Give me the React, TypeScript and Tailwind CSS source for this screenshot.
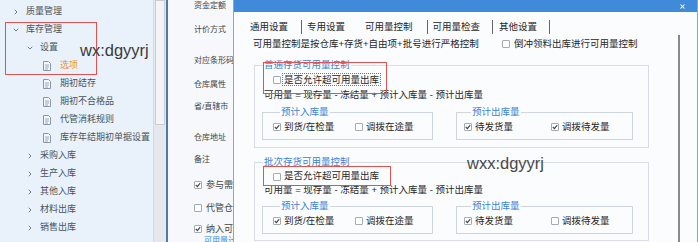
import { ChevronRight, ChevronDown, X } from 'lucide-react';

const tree = [
    { id: 'qm', label: '质量管理', kind: 'closed', pad: 'pl-[12px]' },
    { id: 'kc', label: '库存管理', kind: 'open', pad: 'pl-[12px]' },
    { id: 'sz', label: '设置', kind: 'open', pad: 'pl-[26px]' },
    { id: 'xx', label: '选项', kind: 'doc', active: true },
    { id: 'qcjc', label: '期初结存', kind: 'doc' },
    { id: 'qcbh', label: '期初不合格品', kind: 'doc' },
    { id: 'dg', label: '代管消耗规则', kind: 'doc' },
    { id: 'nj', label: '库存年结期初单据设置', kind: 'doc' },
    { id: 'cg', label: '采购入库', kind: 'closed', pad: 'pl-[26px]' },
    { id: 'sc', label: '生产入库', kind: 'closed', pad: 'pl-[26px]' },
    { id: 'qt', label: '其他入库', kind: 'closed', pad: 'pl-[26px]' },
    { id: 'cl', label: '材料出库', kind: 'closed', pad: 'pl-[26px]' },
    { id: 'xs', label: '销售出库', kind: 'closed', pad: 'pl-[26px]' },
];

function DocIcon() {
    return (
        <svg width="8" height="10" viewBox="0 0 8 10" className="shrink-0">
            <path d="M0.5 0.5 H5.5 L7.5 2.5 V9.5 H0.5 Z" fill="#f4f7fb" stroke="#8a96a6" />
            <path d="M2 4 H6 M2 6 H6 M2 8 H5" stroke="#8a96a6" strokeWidth="0.8" />
        </svg>
    );
}

function Box({ checked = false }: { checked?: boolean }) {
    return (
        <span className="w-[8px] h-[8px] shrink-0 border border-[#a3abb5] bg-white rounded-[1px] flex items-center justify-center">
            {checked && (
                <svg width="6" height="6" viewBox="0 0 6 6">
                    <path d="M0.8 3 L2.4 4.6 L5.2 1.2" fill="none" stroke="#444" strokeWidth="1.1" />
                </svg>
            )}
        </span>
    );
}

function Check({ label, checked, w }: { label: string; checked?: boolean; w?: string }) {
    return (
        <div className={`flex items-center ${w ?? ''}`}>
            <Box checked={checked} />
            <span className="ml-[3px]">{label}</span>
        </div>
    );
}

function SubGroup({ title, className, first, second }: {
    title: string;
    className: string;
    first: { label: string; checked: boolean; w: string };
    second: { label: string; checked: boolean };
}) {
    return (
        <fieldset className={`border border-[#cfd5dc] pb-[6px] ${className}`}>
            <legend className="ml-[7px] px-[1px] text-[9.5px] leading-[10px] text-[#3d83d6]">{title}</legend>
            <div className="mt-[4px] h-[12px] flex items-center">
                <Check label={first.label} checked={first.checked} w={first.w} />
                <Check label={second.label} checked={second.checked} />
            </div>
        </fieldset>
    );
}

function Formula() {
    return (
        <div className="h-[12px] pl-[9px] flex items-center whitespace-pre">
            可用量 = 现存量 - 冻结量 + 预计入库量 - 预计出库量
        </div>
    );
}

export default function App() {
    return (
        <div className="relative w-[698px] h-[242px] overflow-hidden flex bg-white text-[#333] font-['Liberation_Sans','Noto_Sans_CJK_SC',sans-serif]">
            {/* Tree */}
            <aside className="w-[153px] shrink-0 bg-[#e9f2fb] pt-[3px] text-[9px] text-[#4a525c]">
                {tree.map((row) => (
                    <div key={row.id} className={`h-[18px] flex items-center ${row.kind === 'doc' ? 'pl-[43px]' : row.pad}`}>
                        {row.kind === 'doc' ? (
                            <>
                                <DocIcon />
                                <span className={`ml-[9px] ${row.active ? 'text-[#e8912d]' : ''}`}>{row.label}</span>
                            </>
                        ) : (
                            <>
                                <span className="w-[8px] flex justify-center text-[#6f7d8c]">
                                    {row.kind === 'open'
                                        ? <ChevronDown size={8} strokeWidth={3} />
                                        : <ChevronRight size={8} strokeWidth={3} />}
                                </span>
                                <span className="ml-[6px]">{row.label}</span>
                            </>
                        )}
                    </div>
                ))}
            </aside>

            {/* Tree scrollbar */}
            <div className="w-[13px] shrink-0 bg-[#e4e8ed] border-l border-[#d6dbe1] flex flex-col">
                <div className="h-[125px] mx-[1px] bg-[#f2f4f6] border border-[#c9ced5]" />
            </div>
            <div className="w-[2px] shrink-0 bg-[#4f79ad]" />

            {/* Card behind the dialog */}
            <div className="w-[65px] shrink-0 bg-[#f6f8fb] pl-[26px] text-[8px] leading-[12px] text-[#444] whitespace-nowrap overflow-hidden">
                <div className="h-[12px]">资金定额</div>
                <div className="h-[12px] mt-[12px]">计价方式</div>
                <div className="h-[12px] mt-[19px]">对应条形码</div>
                <div className="h-[12px] mt-[12px]">仓库属性</div>
                <div className="h-[12px] mt-[10px]">省/直辖市</div>
                <div className="h-[12px] mt-[19px]">仓库地址</div>
                <div className="h-[12px] mt-[10px]">备注</div>
                <div className="h-[12px] mt-[13px] flex items-center"><Box checked /><span className="ml-[4px] text-[9px]">参与需求计划</span></div>
                <div className="h-[12px] mt-[11px] flex items-center"><Box /><span className="ml-[4px] text-[9px]">代管仓</span></div>
                <div className="h-[12px] mt-[9px] flex items-center"><Box checked /><span className="ml-[4px] text-[9px]">纳入可用量</span></div>
                <div className="h-[12px] pl-[10px] text-[#3d83d6]">可用量计算</div>
            </div>

            {/* Dialog */}
            <div className="flex-1 flex flex-col border-l border-r border-[#8ea6c2] bg-[#fbfcfe] text-[9.5px] text-[#262626]">
                <div className="h-[12px] shrink-0 bg-[#3f8bd9] flex items-center justify-end pr-[11px]">
                    <X size={7} strokeWidth={3.5} className="text-white" />
                </div>

                {/* Tabs */}
                <div className="mt-[7px] h-[16px] flex items-center">
                    <span className="ml-[16px]">通用设置</span>
                    <span className="ml-[13px] w-px h-[14px] bg-[#666]" />
                    <span className="ml-[5px]">专用设置</span>
                    <span className="ml-[20px]">可用量控制</span>
                    <span className="ml-[14px] w-px h-[14px] bg-[#666]" />
                    <span className="ml-[5px]">可用量检查</span>
                    <span className="ml-[12px] w-px h-[14px] bg-[#666]" />
                    <span className="ml-[6px]">其他设置</span>
                    <span className="ml-[12px] w-px h-[14px] bg-[#666]" />
                </div>

                <div className="flex flex-1">
                    <div className="w-[444px] flex flex-col">
                        <div className="mt-[1px] h-[16px] pl-[19px] flex items-center">
                            <span className="w-[249px]">可用量控制是按仓库+存货+自由项+批号进行严格控制</span>
                            <Box />
                            <span className="ml-[4px]">倒冲领料出库进行可用量控制</span>
                        </div>

                        {/* 普通存货 */}
                        <fieldset className="mt-[7px] ml-[20px] w-[395px] border border-[#d8dde3] pb-[7px]">
                            <legend className="ml-[8px] px-[1px] leading-[12px] text-[#3d83d6]">普通存货可用量控制</legend>
                            <div className="mt-[2px] h-[13px] pl-[18px] flex items-center">
                                <Box />
                                <span className="ml-[1px] px-[1px] border border-dotted border-[#777] leading-[11px]">是否允许超可用量出库</span>
                            </div>
                            <div className="mt-[3px]"><Formula /></div>
                            <div className="mt-[6px] flex">
                                <SubGroup
                                    title="预计入库量"
                                    className="ml-[7px] w-[171px] pl-[10px]"
                                    first={{ label: '到货/在检量', checked: true, w: 'w-[82px]' }}
                                    second={{ label: '调拨在途量', checked: false }}
                                />
                                <SubGroup
                                    title="预计出库量"
                                    className="ml-[23px] w-[177px] pl-[7px]"
                                    first={{ label: '待发货量', checked: true, w: 'w-[87px]' }}
                                    second={{ label: '调拨待发量', checked: true }}
                                />
                            </div>
                        </fieldset>

                        {/* 批次存货 */}
                        <fieldset className="mt-[8px] ml-[20px] w-[395px] border border-[#d8dde3] pb-[6px]">
                            <legend className="ml-[8px] px-[1px] leading-[12px] text-[#3d83d6]">批次存货可用量控制</legend>
                            <div className="mt-[2px] h-[13px] pl-[18px] flex items-center">
                                <Box />
                                <span className="ml-[3px]">是否允许超可用量出库</span>
                            </div>
                            <div className="mt-[1px]"><Formula /></div>
                            <div className="mt-[5px] flex">
                                <SubGroup
                                    title="预计入库量"
                                    className="ml-[7px] w-[171px] pl-[10px]"
                                    first={{ label: '到货/在检量', checked: true, w: 'w-[82px]' }}
                                    second={{ label: '调拨在途量', checked: false }}
                                />
                                <SubGroup
                                    title="预计出库量"
                                    className="ml-[23px] w-[177px] pl-[7px]"
                                    first={{ label: '待发货量', checked: true, w: 'w-[87px]' }}
                                    second={{ label: '调拨待发量', checked: false }}
                                />
                            </div>
                        </fieldset>
                    </div>
                    <div className="w-[2px] bg-[#8a8a8a]" />
                </div>
            </div>

            {/* Annotations */}
            <div className="absolute left-[5px] top-[22px] w-[92px] h-[53px] border border-[#e2524f]" />
            <div className="absolute left-[263px] top-[62px] w-[124px] h-[32px] border border-[#e2524f]" />
            <div className="absolute left-[263px] top-[166px] w-[128px] h-[20px] border border-[#e2524f]" />
            <div className="absolute left-[80px] top-[40px] text-[16.5px] leading-[20px] text-[#3a3a3a]">wx:dgyyrj</div>
            <div className="absolute left-[467px] top-[153px] text-[16.5px] leading-[20px] text-[#4a4a4a]">wxx:dgyyrj</div>
        </div>
    );
}
